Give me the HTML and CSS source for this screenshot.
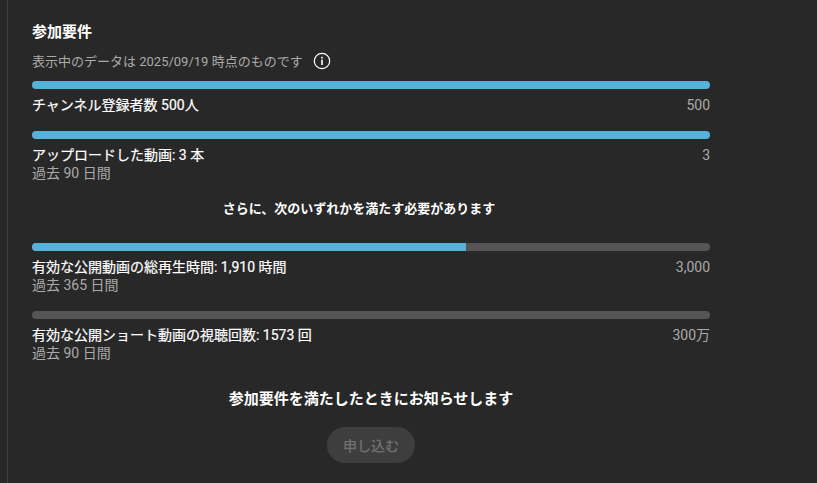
FILE: index.html
```html
<!DOCTYPE html>
<html lang="ja">
<head>
    <meta charset="UTF-8">
    <title>参加要件</title>
    <link rel="stylesheet" href="styles.css">
</head>
<body>
    <div class="panel">
        <h2 class="title">参加要件</h2>
        <div class="updated">
            <span>表示中のデータは 2025/09/19 時点のものです</span>
            <svg class="info" width="18" height="18" viewBox="0 0 18 18">
                <circle cx="9" cy="9" r="7.7" fill="none" stroke="#fff" stroke-width="1.2"/>
                <rect x="8.2" y="4.8" width="1.6" height="1.7" fill="#fff"/>
                <rect x="8.2" y="7.6" width="1.6" height="5.4" fill="#fff"/>
            </svg>
        </div>

        <div class="req req-first">
            <div class="bar"><div class="fill" style="width:100%"></div></div>
            <div class="row">
                <span class="label">チャンネル登録者数 500人</span>
                <span class="goal">500</span>
            </div>
        </div>

        <div class="req">
            <div class="bar"><div class="fill" style="width:100%"></div></div>
            <div class="row">
                <span class="label">アップロードした動画: 3 本</span>
                <span class="goal">3</span>
            </div>
            <div class="period">過去 90 日間</div>
        </div>

        <p class="notice">さらに、次のいずれかを満たす必要があります</p>

        <div class="req">
            <div class="bar"><div class="fill" style="width:64%"></div></div>
            <div class="row">
                <span class="label">有効な公開動画の総再生時間: 1,910 時間</span>
                <span class="goal">3,000</span>
            </div>
            <div class="period">過去 365 日間</div>
        </div>

        <div class="req">
            <div class="bar"><div class="fill" style="width:0%"></div></div>
            <div class="row">
                <span class="label">有効な公開ショート動画の視聴回数: 1573 回</span>
                <span class="goal">300万</span>
            </div>
            <div class="period">過去 90 日間</div>
        </div>

        <p class="notify">参加要件を満たしたときにお知らせします</p>
        <div class="actions">
            <button class="apply" type="button" disabled>申し込む</button>
        </div>
    </div>
</body>
</html>
```

FILE: styles.css
```css
html, body { height: 100%; }
body { margin: 0; background: #282828; color: #fff; font-family: Roboto, "Noto Sans CJK JP", sans-serif; overflow: hidden; }
.panel { box-sizing: border-box; width: 718px; height: 483px; margin-left: 7px; padding: 21px 0 0 24px; border-left: 1px solid #3f3f3f; }
.panel > * { width: 678px; }
.title { margin: 0; font-size: 15px; line-height: 22px; font-weight: 700; }
.updated { display: flex; align-items: center; gap: 10px; margin-top: 7px; height: 20px; font-size: 13px; color: #aaa; }
.info { margin-top: 2px; }
.req { margin-top: 17px; }
.req-first { margin-top: 11px; }
.bar { height: 8px; border-radius: 4px; background: #555; overflow: hidden; }
.fill { height: 100%; background: #55b3d9; }
.row { display: flex; justify-content: space-between; margin-top: 7px; font-size: 14px; line-height: 18px; }
.label { -webkit-text-stroke: 0.2px #fff; }
.goal { color: #aaa; }
.period { font-size: 14px; line-height: 18px; color: #aaa; }
.notice { box-sizing: border-box; margin: 17px 0 25px; padding-right: 24px; height: 19px; text-align: center; font-size: 13px; line-height: 20px; font-weight: 700; }
.notify { margin: 26px 0 0; height: 21px; text-align: center; font-size: 15px; line-height: 22px; font-weight: 700; }
.actions { display: flex; justify-content: center; margin-top: 18px; }
.apply { width: 88px; height: 36px; padding: 0; border: none; border-radius: 18px; background: #3e3e3e; color: #717171; font: 500 14px Roboto, "Noto Sans CJK JP", sans-serif; }
```
